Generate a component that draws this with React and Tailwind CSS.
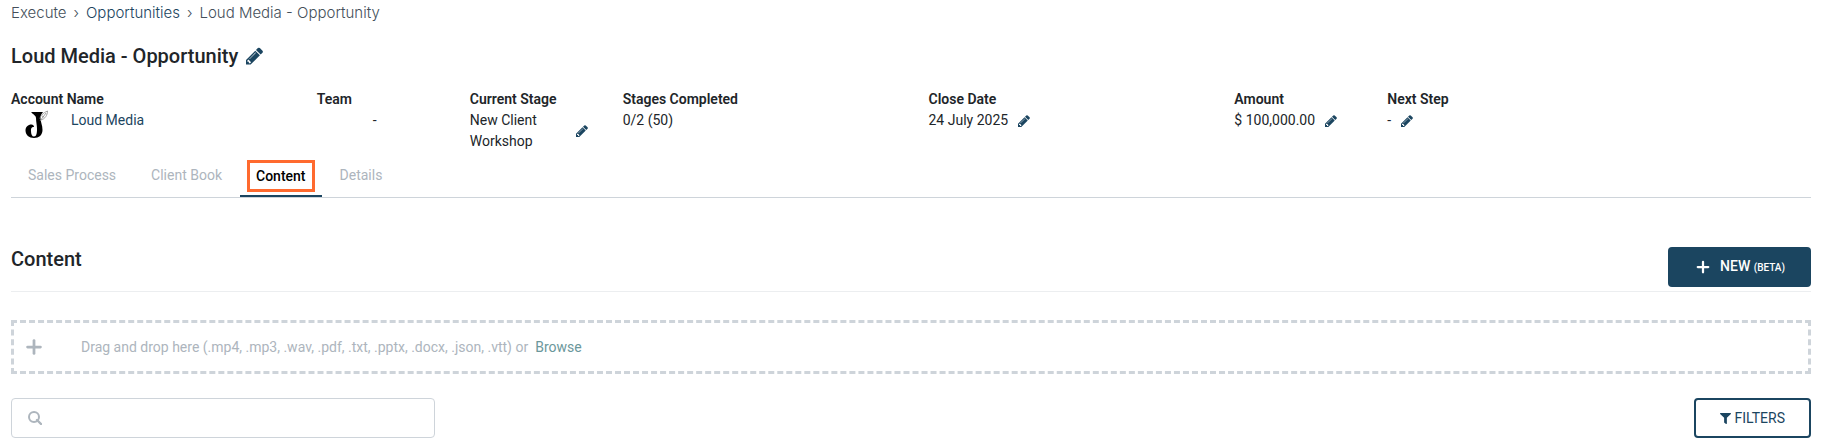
import React, { useState } from 'react';
import { FaFilter } from 'react-icons/fa';
import { LuPlus } from 'react-icons/lu';

const TABS = ['Sales Process', 'Client Book', 'Content', 'Details'];

function PencilButton({ label, size = 14 }) {
  return (
    <button type="button" aria-label={label} className="shrink-0 text-[#1b4560]">
      <svg width={size * 6 / 7} height={size} viewBox="0 0 1536 1792" fill="currentColor" aria-hidden="true">
        <path d="M363 1536l91-91-235-235-91 91v107h128v128h107zM886 608q0-22-22-22-10 0-17 7l-542 542q-7 7-7 17 0 22 22 22 10 0 17-7l542-542q7-7 7-17zM832 416l416 416-832 832h-416v-416zM1515 512q0 53-37 90l-166 166-416-416 166-165q36-38 90-38 53 0 91 38l235 234q37 39 37 91z" />
      </svg>
    </button>
  );
}

function Field({ label, className = '', children }) {
  return (
    <div className={`pl-[11px] ${className}`}>
      <dt className="font-semibold">{label}</dt>
      <dd>{children}</dd>
    </div>
  );
}

function AccountLogo() {
  return (
    <svg width="24" height="28" viewBox="0 0 24 28" aria-hidden="true">
      <path d="M6 2 H18 C16.5 4 15.5 5.5 15.5 8 C15.500 12 17.500 15 17.500 20 C17.500 25 14 28 9 28 C4 28 0.500 25 0.500 20.500 C0.500 17 3 14.500 6.500 14.500 C8 14.500 9 15.500 9 17 C6 17 6 19 6 21 C6 24.500 7 26.500 9 26.500 C11.500 26.500 12 23 12 19 C12 15 11 12 11 8 C11 5.500 8 4.500 6 2 Z" fill="#000" />
      <path d="M15 9 C15 6 18 3 22.500 1 C22.500 5 20 9 16 10 M15 11 L21 3 M17 6 L19 7" fill="none" stroke="#8a8a8a" strokeWidth="0.8" />
    </svg>
  );
}

export default function App() {
  const [activeTab, setActiveTab] = useState('Content');
  const [search, setSearch] = useState('');

  return (
    <div className="bg-white pb-[6px] font-[Roboto,sans-serif] text-sm leading-[21px] text-[#212529]">
      <nav aria-label="Breadcrumb" className="flex items-center gap-[7px] pt-[2px] pl-[11px] font-[Inter,sans-serif] text-[15px] leading-[21px] font-light text-[#444f5a]">
        <a href="#execute">Execute</a>
        <span>›</span>
        <a href="#opportunities" className="text-[#1b4560]">Opportunities</a>
        <span>›</span>
        <span>Loud Media - Opportunity</span>
      </nav>

      <div className="mt-[21px] flex items-center gap-2 pl-[11px]">
        <h1 className="text-xl leading-6 font-medium">Loud Media - Opportunity</h1>
        <PencilButton label="Edit name" size={20} />
      </div>

      <dl className="mt-[21px] grid grid-cols-12">
        <Field label="Account Name" className="col-span-2">
          <div className="flex gap-[22px] pl-[14px]">
            <AccountLogo />
            <a href="#account" className="text-[#1b4560]">Loud Media</a>
          </div>
        </Field>
        <Field label="Team">
          <div className="pl-14">-</div>
        </Field>
        <Field label="Current Stage">
          <div className="flex items-center justify-between pr-6">
            <span className="w-20">New Client Workshop</span>
            <PencilButton label="Edit current stage" />
          </div>
        </Field>
        <Field label="Stages Completed" className="col-span-2">0/2 (50)</Field>
        <Field label="Close Date" className="col-span-2">
          <div className="flex items-center gap-[10px]">
            24 July 2025 <PencilButton label="Edit close date" />
          </div>
        </Field>
        <Field label="Amount">
          <div className="flex items-center gap-[10px]">
            $ 100,000.00 <PencilButton label="Edit amount" />
          </div>
        </Field>
        <Field label="Next Step">
          <div className="flex items-center gap-[10px]">
            - <PencilButton label="Edit next step" />
          </div>
        </Field>
      </dl>

      <div className="pr-6 pl-[11px]">
        <div role="tablist" className="mt-2 flex gap-px border-b border-[#ced4da] leading-5">
          {TABS.map(tab => (
            <button
              key={tab}
              type="button"
              role="tab"
              aria-selected={tab === activeTab}
              onClick={() => setActiveTab(tab)}
              className={tab === activeTab ? 'border-b-2 border-[#1b4560] px-[7px] pb-[3px] font-medium text-black' : 'px-[17px] pb-[7px] text-[#adb5bd]'}
            >
              <span className={tab === activeTab ? 'block border-3 border-[#ff6a2f] px-[6px] py-[3px]' : ''}>{tab}</span>
            </button>
          ))}
        </div>

        <div className="mt-[49px] flex justify-between border-b border-[#eceef0] pb-1">
          <h2 className="text-xl leading-6 font-medium">Content</h2>
          <button type="button" className="flex h-10 items-center gap-2 rounded bg-[#1b4560] px-[26px] font-medium text-white">
            <LuPlus size={18} strokeWidth={3} />
            <span>NEW <small className="text-[10px]">(BETA)</small></span>
          </button>
        </div>

        <div className="mt-7 flex items-center gap-9 border-3 border-dashed border-[#ced4da] px-[9px] py-[13px] leading-5 text-[#adb5bd]">
          <LuPlus size={22} strokeWidth={3} />
          <p>
            Drag and drop here (.mp4, .mp3, .wav, .pdf, .txt, .pptx, .docx, .json, .vtt) or
            <button type="button" className="ml-[7px] text-[#6b979b]">Browse</button>
          </p>
        </div>

        <div className="mt-6 flex justify-between">
          <label className="flex h-10 w-[424px] items-center gap-2 rounded border border-[#ced4da] px-4 text-[#adb5bd]">
            <svg width="14" height="14" viewBox="0 0 14 14" fill="none" stroke="currentColor" strokeWidth="2" aria-hidden="true">
              <circle cx="6" cy="6" r="5" />
              <path d="M9 9 L13 13" strokeWidth="2.4" strokeLinecap="round" />
            </svg>
            <input
              type="text"
              aria-label="Search content"
              value={search}
              onChange={e => setSearch(e.target.value)}
              className="min-w-0 flex-1 text-[#212529] outline-none"
            />
          </label>
          <button type="button" className="flex h-10 items-center gap-1 rounded border-2 border-[#1b4560] px-6 text-[#1b4560]">
            <FaFilter size={11} /> FILTERS
          </button>
        </div>
      </div>
    </div>
  );
}
